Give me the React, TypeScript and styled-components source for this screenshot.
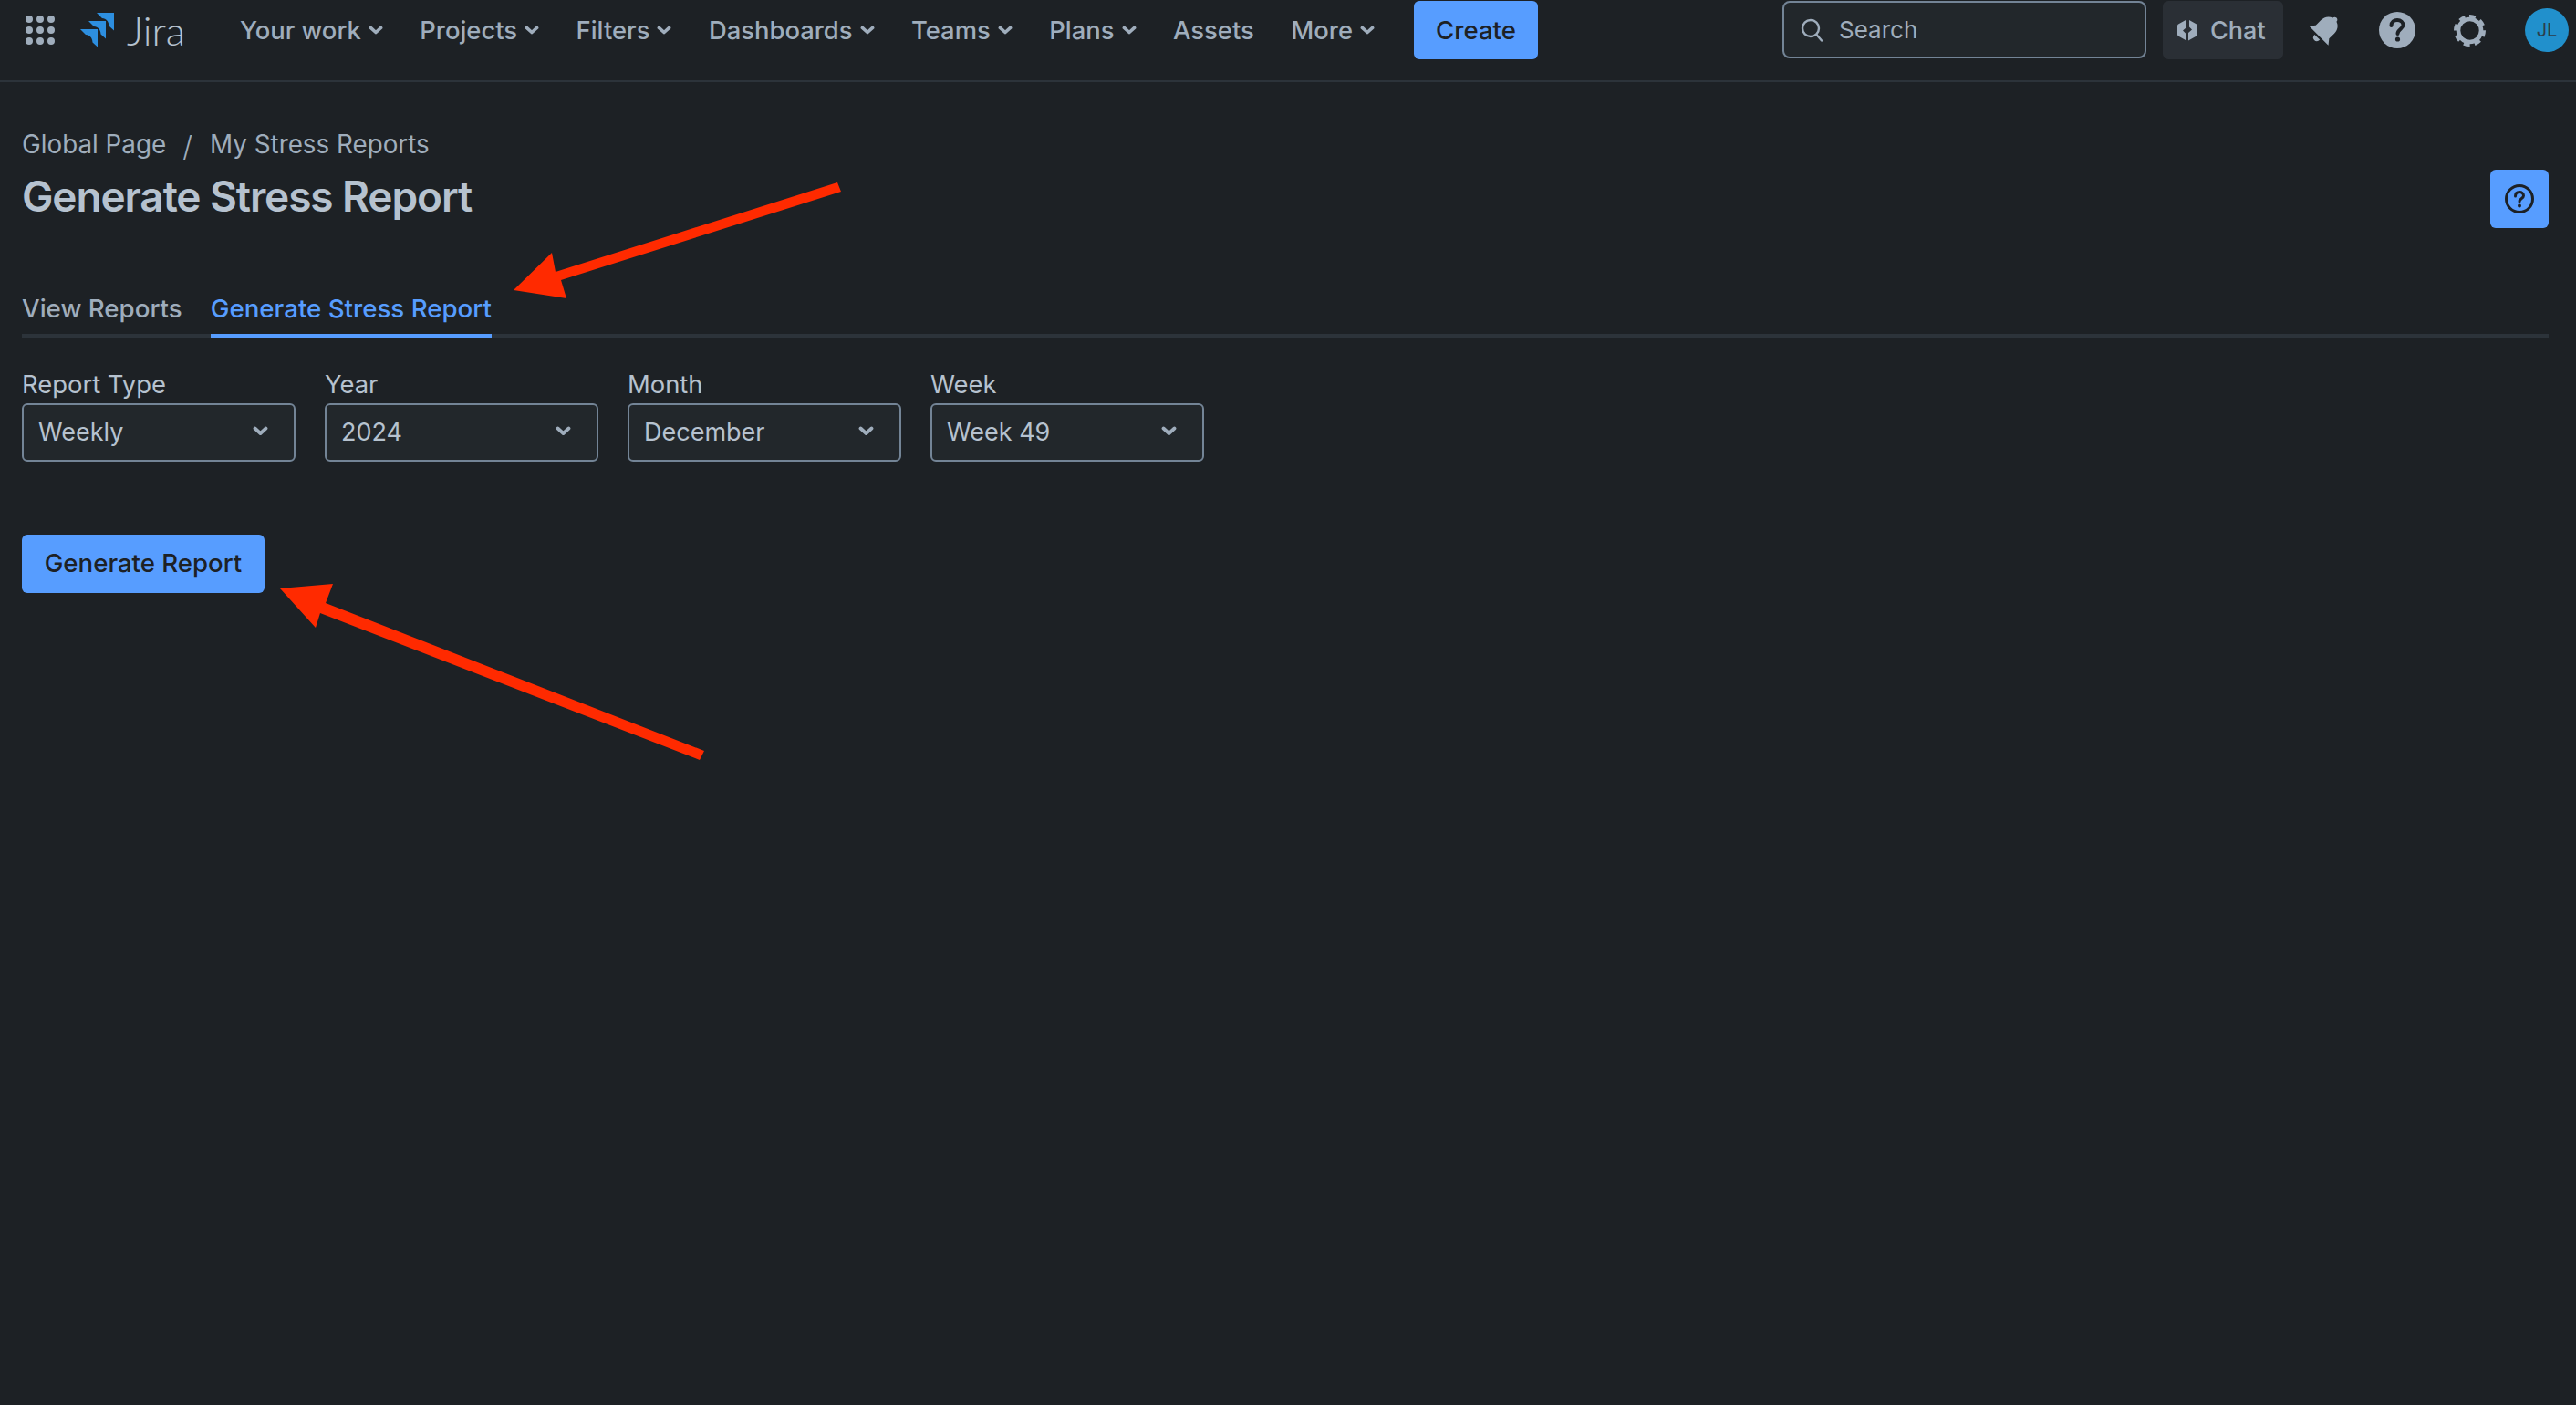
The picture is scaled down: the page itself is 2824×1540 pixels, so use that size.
import React from 'react';
import styled, { createGlobalStyle } from 'styled-components';

const GlobalStyle = createGlobalStyle`
  html, body {
    margin: 0;
    background-color: #1d2125;
    overflow: hidden;
  }
  * {
    box-sizing: border-box;
  }
`;

const Page = styled.div`
  position: relative;
  width: 2824px;
  height: 1540px;
  background-color: #1d2125;
  font-family: Inter, "Noto Sans", sans-serif;
  font-size: 28px;
  color: #b6c2cf;
`;
const Header = styled.header`
  display: flex;
  align-items: flex-start;
  height: 90px;
  padding: 1px 8px 0 28px;
  border-bottom: 2px solid #2c333a;
`;
const HeaderCell = styled.div`
  display: flex;
  align-items: center;
  height: 64px;
`;
const LogoMark = styled.svg`
  margin-left: 28px;
  fill: #2d8fe0;
`;
const LogoText = styled.span`
  margin-left: 14px;
  font-family: Lato, sans-serif;
  font-size: 44px;
  font-weight: 300;
  line-height: 64px;
  color: #b6c2cf;
`;
const Nav = styled.nav`
  display: flex;
  align-items: center;
  gap: 40.5px;
  height: 64px;
  margin-left: 60px;
`;
const NavItem = styled.span`
  display: flex;
  align-items: center;
  gap: 8px;
  color: #9fadbc;
  font-weight: 500;
  font-size: 27.4px;
  white-space: nowrap;
`;
const PrimaryButton = styled.button`
  display: block;
  height: 64px;
  padding: 0 24px;
  border: 0;
  border-radius: 6px;
  background-color: #579dff;
  color: #1d2125;
  font-family: inherit;
  font-size: 27.6px;
  font-weight: 500;
`;
const CreateButton = styled(PrimaryButton)`
  width: 136px;
  margin-left: 43px;
  padding: 0;
`;
const SearchBox = styled.div`
  display: flex;
  align-items: center;
  gap: 16px;
  width: 399px;
  height: 63px;
  margin-left: auto;
  padding-left: 18px;
  border: 2px solid #738496;
  border-radius: 8px;
  background-color: #22272b;
  color: #9fadbc;
  font-size: 26px;
`;
const ChatButton = styled.div`
  display: flex;
  align-items: center;
  gap: 14px;
  width: 132px;
  height: 64px;
  margin-left: 18px;
  padding-left: 16px;
  border-radius: 6px;
  background-color: #2a2f35;
  color: #9fadbc;
  font-weight: 500;
  font-size: 27px;
`;
const IconCell = styled(HeaderCell)<{ $gap: number }>`
  margin-left: ${(props) => props.$gap}px;
`;
const Avatar = styled.div`
  display: flex;
  align-items: center;
  justify-content: center;
  width: 48px;
  height: 48px;
  border-radius: 50%;
  background-color: #2190cc;
  color: #2c3e4c;
  font-size: 20px;
`;
const Main = styled.main`
  padding: 52px 30px 0 24px;
`;
const Breadcrumbs = styled.div`
  display: flex;
  align-items: center;
  height: 32px;
  color: #9fadbc;
  font-size: 27.8px;
`;
const Separator = styled.span`
  margin: 4px 19px 0 18px;
  font-size: 31px;
  font-weight: 300;
`;
const TitleRow = styled.div`
  display: flex;
  align-items: center;
  justify-content: space-between;
  height: 64px;
  margin-top: 12px;
`;
const Title = styled.h1`
  margin: 0 0 6px;
  color: #b6c2cf;
  font-size: 46px;
  font-weight: 600;
  letter-spacing: -1.1px;
`;
const HelpButton = styled.button`
  display: flex;
  align-items: center;
  justify-content: center;
  width: 64px;
  height: 64px;
  padding: 0;
  border: 0;
  border-radius: 6px;
  background-color: #579dff;
`;
const TabList = styled.div`
  display: flex;
  gap: 31px;
  height: 56px;
  margin-top: 64px;
  border-bottom: 4px solid #2c333a;
`;
const Tab = styled.div<{ $active?: boolean }>`
  height: 56px;
  padding-top: 8px;
  line-height: 32px;
  border-bottom: 4px solid ${(props) => (props.$active ? '#579dff' : 'transparent')};
  color: ${(props) => (props.$active ? '#579dff' : '#9fadbc')};
  font-size: 27.7px;
  font-weight: 500;
`;
const FormRow = styled.div`
  display: flex;
  gap: 32.5px;
  margin-top: 38px;
`;
const Field = styled.div`
  width: 299.5px;
`;
const FieldLabel = styled.label`
  display: block;
  height: 34px;
  line-height: 27px;
  color: #b6c2cf;
  font-size: 27.4px;
`;
const SelectBox = styled.div`
  display: flex;
  align-items: center;
  justify-content: space-between;
  height: 64px;
  padding: 0 28px 2px 16px;
  border: 2px solid #738496;
  border-radius: 6px;
  background-color: #22272b;
  color: #b6c2cf;
  font-size: 27px;
`;
const GenerateButton = styled(PrimaryButton)`
  width: 266px;
  margin-top: 80px;
  padding: 0 0 2px;
`;
const Annotations = styled.svg`
  position: absolute;
  top: 0;
  left: 0;
  pointer-events: none;
`;

function Chevron({ size = 17 }: { size?: number }) {
  return (
    <svg width={size} height={size * 0.65} viewBox="0 0 17 11" fill="none">
      <path d="M2.5 2.5 L8.5 8 L14.5 2.5" stroke="#9fadbc" strokeWidth="3.8" strokeLinecap="round" strokeLinejoin="round" />
    </svg>
  );
}

function AppGrid() {
  const spots = [4, 16, 28];
  return (
    <svg width="32" height="32" viewBox="0 0 32 32" fill="#9fadbc">
      {spots.map((y) => spots.map((x) => <circle key={`${x}-${y}`} cx={x} cy={y} r="4" />))}
    </svg>
  );
}

function JiraLogo() {
  const piece = 'M18 0 H37 V19.5 L31.5 14.5 C31 9 28.5 6.5 24 6 Z';
  return (
    <LogoMark width="37" height="38" viewBox="0 0 37 38">
      <path d={piece} />
      <path d={piece} transform="translate(-9 9)" />
      <path d={piece} transform="translate(-18 18)" />
    </LogoMark>
  );
}

function SearchIcon() {
  return (
    <svg width="26" height="28" viewBox="0 0 26 28" fill="none" stroke="#9fadbc" strokeWidth="2.4">
      <circle cx="11" cy="12" r="9" />
      <path d="M17.5 19 L23 25.5" strokeLinecap="round" />
    </svg>
  );
}

function ChatIcon() {
  const half = 'M10 .6 L1 5.5 Q0 6 0 7.2 V16.8 Q0 18 1 18.5 L9 22.9 V15.5 L6 12.5 L10 9 Z';
  return (
    <svg width="22" height="24" viewBox="0 0 22 24" fill="#9fadbc">
      <path d={half} />
      <path d={half} transform="rotate(180 11 12)" />
    </svg>
  );
}

function BellIcon() {
  return (
    <svg width="32" height="33" viewBox="0 0 32 33" fill="#9fadbc" overflow="visible">
      <g transform="rotate(45 16 16) translate(-3.5 -3) scale(1.15)">
        <path d="M17 0 C18.5 0 19.5 1 19.5 2.5 C24 4 26 8 26 12 V19 L30 24 H4 L8 19 V12 C8 8 10 4 14.5 2.5 C14.5 1 15.5 0 17 0 Z" />
        <path d="M13.5 26 H20.5 C20.5 28.5 19 30 17 30 C15 30 13.5 28.5 13.5 26 Z" />
      </g>
    </svg>
  );
}

function HelpFilled() {
  return (
    <svg width="40" height="40" viewBox="0 0 40 40">
      <circle cx="20" cy="20" r="20" fill="#9fadbc" />
      <path d="M13.5 15 C13.5 11 16.5 9 20 9 C24 9 26.5 11.5 26.5 14.5 C26.5 18.5 20.5 19 20.5 24" fill="none" stroke="#1d2125" strokeWidth="4" strokeLinecap="round" />
      <circle cx="20.5" cy="30" r="2.6" fill="#1d2125" />
    </svg>
  );
}

function GearIcon() {
  return (
    <svg width="35" height="35" viewBox="0 0 35 35" fill="none" stroke="#9fadbc">
      <circle cx="17.5" cy="17.5" r="12.5" strokeWidth="4.6" />
      <circle cx="17.5" cy="17.5" r="15" strokeWidth="5" strokeDasharray="6.5 5.28" transform="rotate(-11.25 17.5 17.5) rotate(-90 17.5 17.5)" strokeDashoffset="-2.6" />
    </svg>
  );
}

function HelpOutline() {
  return (
    <svg width="32" height="32" viewBox="0 0 32 32">
      <circle cx="16" cy="16" r="14.5" fill="none" stroke="#1d2125" strokeWidth="3" />
      <path d="M11.5 13 C11.5 10 13.5 8.5 16 8.5 C18.5 8.5 20.5 10 20.5 12.5 C20.5 15.5 16 15.5 16 19" fill="none" stroke="#1d2125" strokeWidth="3" strokeLinecap="round" />
      <circle cx="16" cy="23.5" r="2" fill="#1d2125" />
    </svg>
  );
}

const navItems = [
  { name: 'Your work', menu: true },
  { name: 'Projects', menu: true },
  { name: 'Filters', menu: true },
  { name: 'Dashboards', menu: true },
  { name: 'Teams', menu: true },
  { name: 'Plans', menu: true },
  { name: 'Assets', menu: false },
  { name: 'More', menu: true },
];

const fields = [
  { label: 'Report Type', value: 'Weekly' },
  { label: 'Year', value: '2024' },
  { label: 'Month', value: 'December' },
  { label: 'Week', value: 'Week 49' },
];

function App(): JSX.Element {
  return (
    <Page>
      <GlobalStyle />
      <Header>
        <HeaderCell>
          <AppGrid />
          <JiraLogo />
          <LogoText>Jira</LogoText>
        </HeaderCell>
        <Nav>
          {navItems.map((item) => (
            <NavItem key={item.name}>
              {item.name}
              {item.menu && <Chevron size={16} />}
            </NavItem>
          ))}
        </Nav>
        <CreateButton>Create</CreateButton>
        <SearchBox>
          <SearchIcon />
          Search
        </SearchBox>
        <ChatButton>
          <ChatIcon />
          Chat
        </ChatButton>
        <IconCell $gap={29}><BellIcon /></IconCell>
        <IconCell $gap={44}><HelpFilled /></IconCell>
        <IconCell $gap={42}><GearIcon /></IconCell>
        <IconCell $gap={43}><Avatar>JL</Avatar></IconCell>
      </Header>
      <Main>
        <Breadcrumbs>
          <span>Global Page</span>
          <Separator>/</Separator>
          <span>My Stress Reports</span>
        </Breadcrumbs>
        <TitleRow>
          <Title>Generate Stress Report</Title>
          <HelpButton><HelpOutline /></HelpButton>
        </TitleRow>
        <TabList>
          <Tab>View Reports</Tab>
          <Tab $active>Generate Stress Report</Tab>
        </TabList>
        <FormRow>
          {fields.map((field) => (
            <Field key={field.label}>
              <FieldLabel>{field.label}</FieldLabel>
              <SelectBox>
                {field.value}
                <Chevron />
              </SelectBox>
            </Field>
          ))}
        </FormRow>
        <GenerateButton>Generate Report</GenerateButton>
      </Main>
      <Annotations width="2824" height="1540" viewBox="0 0 2824 1540" fill="#ff2a00">
        <polygon points="918,200 922,210 615,307 621,327 563,318 605,277 609,298" />
        <polygon points="307,645 365,640 357,661 772,823 767,833 351,672 346,688" />
      </Annotations>
    </Page>
  );
}

export default App;
